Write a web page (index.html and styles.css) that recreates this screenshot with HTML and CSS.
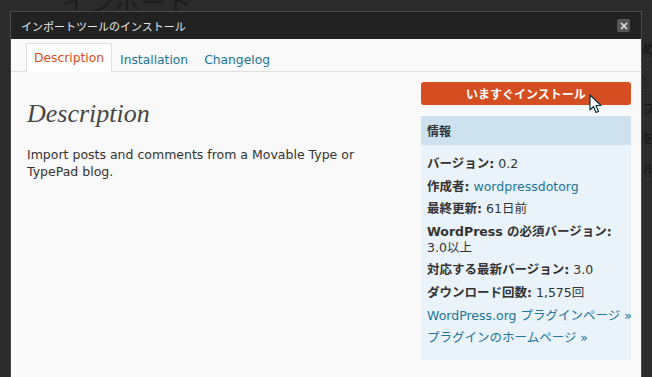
FILE: index.html
```html
<!DOCTYPE html>
<html lang="ja">

<head>
    <meta charset="UTF-8" />
    <title>インポートツールのインストール</title>
    <link rel="stylesheet" href="styles.css">
</head>

<body>
    <div class="backdrop">
        <div class="backdrop-title">インポート</div>
        <div class="backdrop-rows">
            <div class="backdrop-row">め</div>
            <div class="backdrop-row">›</div>
            <div class="backdrop-row">フ</div>
            <div class="backdrop-row">を</div>
            <div class="backdrop-row">ル</div>
        </div>
    </div>

    <div class="modal">
        <div class="modal-title">
            <span>インポートツールのインストール</span>
            <span class="modal-close">
                <svg width="8" height="8" viewBox="0 0 8 8">
                    <path d="M1 1 L7 7 M7 1 L1 7" stroke="#e6e6e6" stroke-width="1.6" />
                </svg>
            </span>
        </div>

        <div class="tabs">
            <a class="tab current">Description</a>
            <a class="tab">Installation</a>
            <a class="tab">Changelog</a>
        </div>

        <div class="modal-body">
            <div class="main-col">
                <h2>Description</h2>
                <p>Import posts and comments from a Movable Type or TypePad blog.</p>
            </div>

            <div class="side-col">
                <button class="install-btn">いますぐインストール</button>

                <div class="info-box">
                    <h3>情報</h3>
                    <ul>
                        <li><strong>バージョン:</strong> 0.2</li>
                        <li><strong>作成者:</strong> <a>wordpressdotorg</a></li>
                        <li><strong>最終更新:</strong> 61日前</li>
                        <li><strong>WordPress の必須バージョン:</strong> 3.0以上</li>
                        <li><strong>対応する最新バージョン:</strong> 3.0</li>
                        <li><strong>ダウンロード回数:</strong> 1,575回</li>
                        <li class="link-item"><a>WordPress.org プラグインページ &raquo;</a></li>
                        <li class="link-item"><a>プラグインのホームページ &raquo;</a></li>
                    </ul>
                </div>

                <svg class="cursor" width="13" height="20" viewBox="0 0 13 20">
                    <path d="M1 1 L1 16 L4.5 12.5 L7 18.5 L9.5 17.5 L7 11.5 L12 11.5 Z" fill="#fff" stroke="#0b3440" stroke-width="1.2" stroke-linejoin="round" />
                </svg>
            </div>
        </div>
    </div>
</body>

</html>
```

FILE: styles.css
```css
body {
    margin: 0;
    background-color: #2b2b2b;
    font-family: 'DejaVu Sans', 'Noto Sans CJK JP', sans-serif;
    overflow: hidden;
    height: 377px;
}

/* dimmed admin page behind the overlay */
.backdrop {
    position: relative;
    height: 377px;
}

.backdrop-title {
    position: absolute;
    left: 62px;
    top: -18px;
    font-family: 'Noto Sans CJK JP', sans-serif;
    font-size: 26px;
    color: #1d1d1d;
}

.backdrop-rows {
    position: absolute;
    left: 642px;
    top: 30px;
    width: 40px;
    font-family: 'Noto Sans CJK JP', sans-serif;
    font-size: 13px;
    color: #161616;
}

.backdrop-row {
    height: 30px;
    border-bottom: 1px solid #333;
    padding-top: 8px;
    box-sizing: border-box;
}

.modal {
    position: absolute;
    left: 10px;
    top: 11px;
    width: 630px;
    height: 380px;
    border: 1px solid #4c4c4c;
    border-bottom: none;
    background-color: #f9f9f9;
}

.modal-title {
    display: flex;
    justify-content: space-between;
    align-items: center;
    height: 27px;
    padding: 0 11px 0 10px;
    background-color: #222;
    color: #e8e8e8;
    font-family: 'Noto Sans CJK JP', sans-serif;
    font-size: 11px;
}

.modal-close {
    display: flex;
    justify-content: center;
    align-items: center;
    width: 13px;
    height: 13px;
    background-color: #555;
    border-radius: 2px;
}

.tabs {
    display: flex;
    align-items: flex-end;
    height: 32px;
    padding-left: 15px;
    border-bottom: 1px solid #dfdfdf;
}

.tab {
    padding: 0 7px;
    height: 26px;
    line-height: 28px;
    font-size: 12.3px;
    color: #21759b;
    border: 1px solid transparent;
    border-bottom: none;
    margin-bottom: -1px;
}

.tab.current {
    color: #d54e21;
    background-color: #fff;
    border-color: #dfdfdf;
    border-radius: 3px 3px 0 0;
    height: 28px;
}

.modal-body {
    display: flex;
    justify-content: space-between;
    padding: 10px 10px 0 16px;
}

.main-col {
    flex: 1;
    color: #333;
}

.main-col h2 {
    margin: 17px 0 0;
    font-family: 'Liberation Serif', serif;
    font-style: italic;
    font-weight: normal;
    font-size: 26px;
    color: #464646;
}

.main-col p {
    margin: 17px 0 0;
    width: 350px;
    font-size: 12.5px;
    line-height: 17px;
}

.side-col {
    position: relative;
    width: 210px;
}

.install-btn {
    display: block;
    width: 100%;
    height: 23px;
    border: none;
    border-radius: 3px;
    background-color: #d54e21;
    color: #fff;
    font-family: 'Noto Sans CJK JP', sans-serif;
    font-weight: bold;
    font-size: 12px;
    padding: 0;
}

.info-box {
    margin-top: 11px;
    background-color: #eaf2fa;
    padding-bottom: 10px;
}

.info-box h3 {
    margin: 0;
    height: 29px;
    line-height: 29px;
    padding-left: 6px;
    background-color: #cee1ef;
    font-family: 'Noto Sans CJK JP', sans-serif;
    font-size: 12px;
    color: #333;
}

.info-box ul {
    list-style: none;
    margin: 0;
    padding: 8px 4px 0 6px;
    font-family: 'DejaVu Sans', 'Noto Sans CJK JP', sans-serif;
    font-size: 12.5px;
    color: #333;
}

.info-box li {
    line-height: 16px;
    padding: 3px 0 3.6px;
}

.info-box li.link-item {
    white-space: nowrap;
}

.info-box a {
    color: #21759b;
}

.cursor {
    position: absolute;
    left: 168px;
    top: 12px;
}
```
